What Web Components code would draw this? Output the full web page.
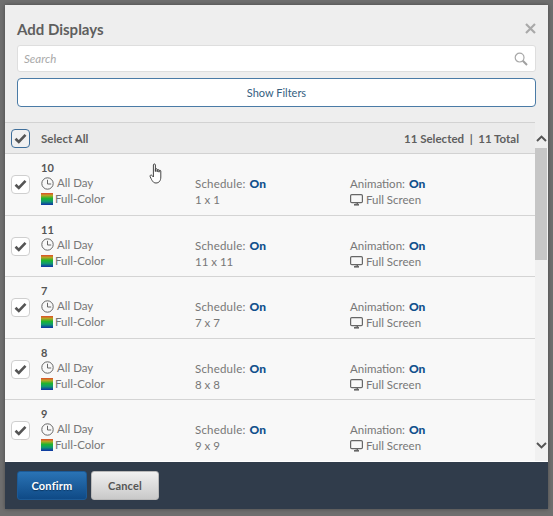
<!DOCTYPE html>
<html>
<head>
<meta charset="utf-8">
<title>Add Displays</title>
<style>
  html, body { margin: 0; padding: 0; height: 516px; overflow: hidden; }
  body { background: #6f6f6f; font-family: Lato, "Liberation Sans", sans-serif; }
</style>
</head>
<body>
<add-displays-dialog>
  <display-row name="10" size="1 x 1"></display-row>
  <display-row name="11" size="11 x 11"></display-row>
  <display-row name="7" size="7 x 7"></display-row>
  <display-row name="8" size="8 x 8"></display-row>
  <display-row name="9" size="9 x 9"></display-row>
  <dialog-button slot="footer" kind="primary">Confirm</dialog-button>
  <dialog-button slot="footer">Cancel</dialog-button>
</add-displays-dialog>

<script>
class CheckBox extends HTMLElement {
  constructor () {
    super()
    this.shadow = this.attachShadow({ mode: 'open' })
  }

  connectedCallback () {
    this.shadow.innerHTML = `
      <style>
        :host {
          display: flex;
          align-items: center;
          justify-content: center;
          box-sizing: border-box;
          width: 19px;
          height: 19px;
          flex: none;
          background: #fff;
          border: 1px solid #cfcfcf;
          border-radius: 4px;
        }
        :host([focused]) {
          background: #f1f1f1;
          border-color: #3f6f9b;
        }
        svg { display: block; }
      </style>
      <svg width="13" height="11" viewBox="0 0 13 11">
        <path d="M1.5 5.8 L4.8 9 L11.5 1.8" fill="none" stroke="#555" stroke-width="2.6"/>
      </svg>`
  }
}

class DisplayRow extends HTMLElement {
  constructor () {
    super()
    this.shadow = this.attachShadow({ mode: 'open' })
  }

  connectedCallback () {
    const name = this.getAttribute('name')
    const size = this.getAttribute('size')
    const gradId = 'grad' + name
    this.shadow.innerHTML = `
      <style>
        :host {
          display: grid;
          grid-template-columns: 30px 154px 155px 1fr;
          align-items: start;
          box-sizing: border-box;
          height: 61.6px;
          padding: 7px 0 0 6px;
          background: #f8f8f8;
          border-bottom: 1px solid #d4d4d4;
          color: #777;
          font-size: 11.5px;
          line-height: 16px;
        }
        check-box { margin-top: 14px; }
        .name { font-weight: 700; color: #555; font-size: 11px; line-height: 14px; }
        .line { display: flex; align-items: center; gap: 3px; height: 16px; white-space: nowrap; }
        .cell { padding-top: 15px; }
        .first { padding-top: 0; }
        .sched { letter-spacing: .2px; }
        b { color: #10508c; font-weight: 900; margin-left: 1px; font-size: 12px; letter-spacing: 0; }
        svg { display: block; flex: none; }
      </style>
      <check-box></check-box>
      <div class="first">
        <div class="name">${name}</div>
        <div class="line">
          <svg width="13" height="13" viewBox="0 0 13 13">
            <circle cx="6.5" cy="6.5" r="5.7" fill="none" stroke="#666" stroke-width="1"/>
            <path d="M6.5 2.8 V7 H10.2" fill="none" stroke="#666" stroke-width="1"/>
          </svg>
          <span>All Day</span>
        </div>
        <div class="line" style="gap:2px">
          <svg width="12" height="12" viewBox="0 0 12 12">
            <defs>
              <linearGradient id="${gradId}" x1="0" y1="0" x2="0" y2="1">
                <stop offset="0" stop-color="#e0482a"/>
                <stop offset=".2" stop-color="#b8a424"/>
                <stop offset=".45" stop-color="#1fb52e"/>
                <stop offset=".7" stop-color="#109a70"/>
                <stop offset="1" stop-color="#0f2fa8"/>
              </linearGradient>
            </defs>
            <rect width="12" height="12" fill="url(#${gradId})"/>
          </svg>
          <span>Full-Color</span>
        </div>
      </div>
      <div class="cell">
        <div class="line sched">Schedule:<b>On</b></div>
        <div class="line">${size}</div>
      </div>
      <div class="cell">
        <div class="line">Animation:<b>On</b></div>
        <div class="line">
          <svg width="13" height="12" viewBox="0 0 13 12">
            <rect x=".6" y=".6" width="11.8" height="8" rx="1.2" fill="none" stroke="#666" stroke-width="1.2"/>
            <path d="M4 10.8 H9" stroke="#666" stroke-width="1.6"/>
            <path d="M5.5 9 H7.5 V10" stroke="#666" stroke-width="1.2" fill="none"/>
          </svg>
          <span>Full Screen</span>
        </div>
      </div>`
  }
}

class DialogButton extends HTMLElement {
  constructor () {
    super()
    this.shadow = this.attachShadow({ mode: 'open' })
  }

  connectedCallback () {
    this.shadow.innerHTML = `
      <style>
        :host {
          display: flex;
          align-items: center;
          justify-content: center;
          box-sizing: border-box;
          height: 29px;
          width: 68px;
          border-radius: 3px;
          background: linear-gradient(#f0f0f0, #c9c9c9);
          border: 1px solid #b9b9b9;
          color: #555;
          font-size: 11px;
          font-weight: 700;
          letter-spacing: .2px;
        }
        :host([kind="primary"]) {
          width: 70px;
          background: linear-gradient(#2a73b5, #0f4a86);
          border-color: #1c5a96;
          color: #fff;
          text-shadow: 0 1px 1px #0b3560;
        }
      </style>
      <slot></slot>`
  }
}

class AddDisplaysDialog extends HTMLElement {
  constructor () {
    super()
    this.shadow = this.attachShadow({ mode: 'open' })
  }

  connectedCallback () {
    this.shadow.innerHTML = `
      <style>
        :host {
          display: flex;
          flex-direction: column;
          position: relative;
          box-sizing: border-box;
          width: 543px;
          height: 504px;
          margin: 5px 5px 7px;
          background: #eeeeee;
          color: #6f6f6f;
          box-shadow: 0 0 4px rgba(0,0,0,.35);
        }
        header { padding: 0 12px 0 12px; height: 117px; flex: none; box-sizing: border-box; }
        .title-bar { display: flex; justify-content: space-between; align-items: center; height: 40px; padding-top: 7px; box-sizing: border-box; }
        h1 { margin: 0; font-size: 15px; font-weight: 700; color: #5f5f5f; }
        .search {
          display: flex;
          align-items: center;
          justify-content: space-between;
          box-sizing: border-box;
          height: 27px;
          padding: 0 7px 0 6px;
          background: #fff;
          border: 1px solid #dedede;
          border-radius: 3px;
          font-size: 11.5px;
          font-style: italic;
          color: #a9a9a9;
        }
        .filters {
          display: flex;
          align-items: center;
          justify-content: center;
          box-sizing: border-box;
          height: 29px;
          margin-top: 6px;
          background: #fff;
          border: 1px solid #4a7ba6;
          border-radius: 4px;
          color: #35607f;
          font-size: 11px;
        }
        .list-area { display: flex; flex: 1; min-height: 0; }
        .list { flex: 1; min-width: 0; display: flex; flex-direction: column; overflow: hidden; }
        .list-head {
          display: flex;
          align-items: center;
          flex: none;
          box-sizing: border-box;
          height: 32px;
          padding: 0 16px 0 6px;
          background: #ebebeb;
          border-top: 1px solid #d2d2d2;
          border-bottom: 1px solid #d2d2d2;
          font-size: 11.5px;
          font-weight: 700;
          color: #5f5f5f;
        }
        .list-head span:first-of-type { margin-left: 11px; flex: 1; }
        .rows { flex: 1; min-height: 0; overflow: hidden; background: #f8f8f8; }
        ::slotted(display-row:last-of-type) { border-bottom: 0; }
        .scroll { width: 13px; flex: none; display: flex; flex-direction: column; background: #f1f1f1; }
        .scroll .top { height: 26px; flex: none; display: flex; align-items: flex-end; justify-content: center; background: #eee; }
        .thumb { height: 112px; flex: none; margin-right: 1px; background: #c6c6c6; }
        .scroll .gap { flex: 1; }
        .scroll .bottom { height: 19px; flex: none; display: flex; align-items: flex-start; justify-content: center; }
        footer {
          display: flex;
          align-items: center;
          gap: 4px;
          flex: none;
          box-sizing: border-box;
          height: 48px;
          padding: 0 12px 0 12px;
          background: #303c4b;
          border-top: 1px solid #fff;
        }
        .cursor { position: absolute; left: 144px; top: 158px; }
        svg { display: block; }
      </style>
      <header>
        <div class="title-bar">
          <h1>Add Displays</h1>
          <svg width="11" height="11" viewBox="0 0 11 11">
            <path d="M1 1 L10 10 M10 1 L1 10" stroke="#a9a9a9" stroke-width="2.2"/>
          </svg>
        </div>
        <div class="search">
          <span>Search</span>
          <svg width="14" height="14" viewBox="0 0 14 14">
            <circle cx="5.6" cy="5.6" r="4.4" fill="none" stroke="#a8a8a8" stroke-width="1.2"/>
            <path d="M8.8 8.8 L13 13" stroke="#a0a0a0" stroke-width="2"/>
          </svg>
        </div>
        <div class="filters">Show Filters</div>
      </header>
      <div class="list-area">
        <div class="list">
          <div class="list-head">
            <check-box focused></check-box>
            <span>Select All</span>
            <span>11 Selected &nbsp;|&nbsp; 11 Total</span>
          </div>
          <div class="rows"><slot></slot></div>
        </div>
        <div class="scroll">
          <div class="top">
            <svg width="11" height="7" viewBox="0 0 11 7" style="margin-bottom:6px"><path d="M1 6 L5.5 1.6 L10 6" fill="none" stroke="#555" stroke-width="2"/></svg>
          </div>
          <div class="thumb"></div>
          <div class="gap"></div>
          <div class="bottom">
            <svg width="11" height="7" viewBox="0 0 11 7"><path d="M1 1 L5.5 5.4 L10 1" fill="none" stroke="#555" stroke-width="2"/></svg>
          </div>
        </div>
      </div>
      <footer><slot name="footer"></slot></footer>
      <svg class="cursor" width="14" height="21" viewBox="0 0 14 21">
        <path d="M4.4 11 V2 C4.4 .6 6.4 .6 6.4 2 V8.5 V6.5 C6.4 5.4 8.2 5.4 8.2 6.5 V8.8 V7.3 C8.2 6.3 10 6.3 10 7.3 V9.2 V8 C10 7 11.8 7 11.8 8 V14 C11.8 17.5 10.2 20 7 20 C4.2 20 3.2 18 1.2 13.8 C.5 12.2 2.2 11.4 3.2 12.6 L4.4 14 Z" fill="#fff" stroke="#444" stroke-width="1"/>
      </svg>`
  }
}

customElements.define('check-box', CheckBox)
customElements.define('display-row', DisplayRow)
customElements.define('dialog-button', DialogButton)
customElements.define('add-displays-dialog', AddDisplaysDialog)
</script>
</body>
</html>
